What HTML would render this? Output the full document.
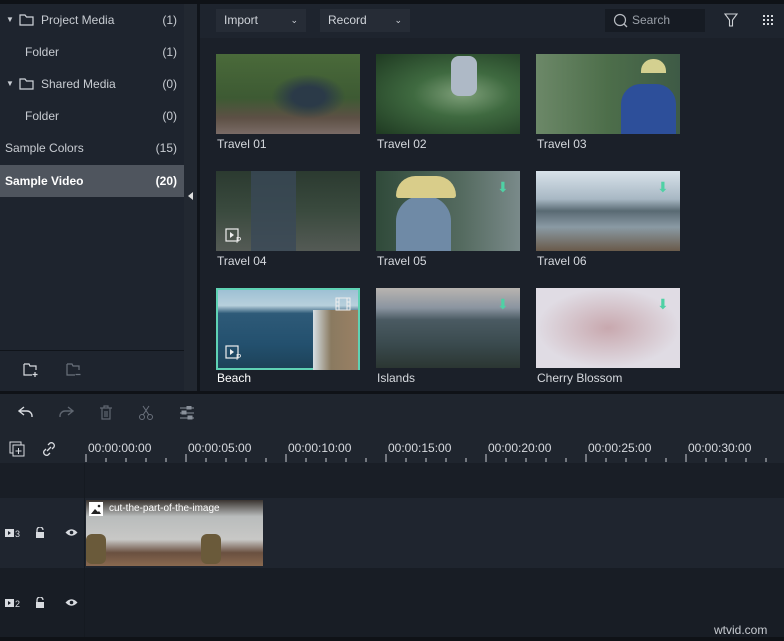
<!DOCTYPE html><html><head><style>
*{margin:0;padding:0;box-sizing:border-box}
body{width:784px;height:641px;background:#1b2029;font-family:"Liberation Sans",sans-serif;color:#d0d4da;font-size:12px;position:relative;overflow:hidden}
.a{position:absolute}
.row{position:absolute;left:0;width:184px;height:32px;line-height:32px;font-size:12px;color:#c8ccd2}
.row .n{position:absolute;right:7px}
.th{position:absolute;width:144px;height:80px}
.lb{position:absolute;font-size:12px;color:#d6d9de}
.dl{position:absolute;width:14px;height:14px;color:#4fd1a5;font-size:14px}
</style></head><body>
<div class="a" style="left:0;top:0;width:784px;height:4px;background:#0f1217"></div>
<!-- left panel -->
<div class="a" style="left:0;top:4px;width:184px;height:387px;background:#1e242e"></div>
<div class="a" style="left:184px;top:4px;width:13px;height:387px;background:#222831"></div>
<div class="a" style="left:197px;top:4px;width:3px;height:387px;background:#10141a"></div>
<div class="row" style="top:4px"><span style="position:absolute;left:6px;font-size:8px">▼</span><svg class="a" style="left:19px;top:9px" width="15" height="13"><path d="M1 2h5l1.5 2H14v8H1z" fill="none" stroke="#d0d4da" stroke-width="1.2"/></svg><span style="position:absolute;left:41px">Project Media</span><span class="n">(1)</span></div>
<div class="row" style="top:36px"><span style="position:absolute;left:25px">Folder</span><span class="n">(1)</span></div>
<div class="row" style="top:68px"><span style="position:absolute;left:6px;font-size:8px">▼</span><svg class="a" style="left:19px;top:9px" width="15" height="13"><path d="M1 2h5l1.5 2H14v8H1z" fill="none" stroke="#d0d4da" stroke-width="1.2"/></svg><span style="position:absolute;left:41px">Shared Media</span><span class="n">(0)</span></div>
<div class="row" style="top:100px"><span style="position:absolute;left:25px">Folder</span><span class="n">(0)</span></div>
<div class="row" style="top:132px"><span style="position:absolute;left:5px">Sample Colors</span><span class="n">(15)</span></div>
<div class="row" style="top:165px;background:#4f555e;color:#fff;font-weight:bold;height:32px"><span style="position:absolute;left:5px">Sample Video</span><span class="n">(20)</span></div>
<div class="a" style="left:188px;top:192px;width:0;height:0;border-top:4px solid transparent;border-bottom:4px solid transparent;border-right:5px solid #ddd"></div>
<div class="a" style="left:0;top:350px;width:184px;height:1px;background:#10141a"></div>
<svg class="a" style="left:23px;top:363px" width="16" height="14"><path d="M1 1h5l1 2h6v4M1 1v11h8M12 9v5M9.5 11.5h5" fill="none" stroke="#d8dbe0" stroke-width="1.2"/></svg>
<svg class="a" style="left:66px;top:363px" width="16" height="14"><path d="M1 1h5l1 2h6v4M1 1v11h8M9.5 11.5h5" fill="none" stroke="#6a717c" stroke-width="1.2"/></svg>
<!-- right toolbar -->
<div class="a" style="left:200px;top:4px;width:584px;height:34px;background:#1e242e"></div>
<div class="a" style="left:216px;top:9px;width:90px;height:23px;background:#262c36;line-height:23px;padding-left:8px">Import<span style="position:absolute;right:8px;font-size:9px">⌄</span></div>
<div class="a" style="left:320px;top:9px;width:90px;height:23px;background:#262c36;line-height:23px;padding-left:8px">Record<span style="position:absolute;right:8px;font-size:9px">⌄</span></div>
<div class="a" style="left:605px;top:9px;width:100px;height:23px;background:#161b23;line-height:23px;padding-left:27px;color:#9aa0a8">Search</div>
<svg class="a" style="left:613px;top:13px" width="16" height="16"><circle cx="7" cy="7" r="5.5" fill="none" stroke="#b8bcc2" stroke-width="1.2"/><path d="M11 11l3 3" stroke="#b8bcc2" stroke-width="1.3"/></svg>
<svg class="a" style="left:724px;top:13px" width="14" height="14"><path d="M1 1h12L8.5 7v6h-3V7z" fill="none" stroke="#cfd2d6" stroke-width="1.1"/></svg>
<svg class="a" style="left:763px;top:15px" width="12" height="12" fill="#d8dbe0"><rect x="0" y="0" width="2" height="2"/><rect x="4" y="0" width="2" height="2"/><rect x="8" y="0" width="2" height="2"/><rect x="0" y="4" width="2" height="2"/><rect x="4" y="4" width="2" height="2"/><rect x="8" y="4" width="2" height="2"/><rect x="0" y="8" width="2" height="2"/><rect x="4" y="8" width="2" height="2"/><rect x="8" y="8" width="2" height="2"/></svg>
<!-- thumbnails -->
<div class="th" style="left:216px;top:54px;background:linear-gradient(180deg,#4a6a3a 0%,#3d5a33 55%,#5d5045 80%,#7a6b66 100%)"><div class="a" style="left:55px;top:20px;width:75px;height:45px;background:radial-gradient(ellipse,#2b3a48 30%,transparent 70%)"></div></div>
<div class="th" style="left:376px;top:54px;background:radial-gradient(ellipse at 60% 50%,#7fa07a 0%,#3f6a40 40%,#1f3a22 100%)"><div class="a" style="left:75px;top:2px;width:26px;height:40px;background:#aeb9c6;border-radius:8px"></div></div>
<div class="th" style="left:536px;top:54px;background:linear-gradient(90deg,#6c8868,#4d6e4a 50%,#3e5a46)"><div class="a" style="left:85px;top:30px;width:55px;height:50px;background:#2d4f9a;border-radius:20px 20px 0 0"></div><div class="a" style="left:105px;top:5px;width:25px;height:14px;background:#d4d090;border-radius:12px 12px 0 0"></div></div>
<div class="lb" style="left:217px;top:137px">Travel 01</div><div class="lb" style="left:377px;top:137px">Travel 02</div><div class="lb" style="left:537px;top:137px">Travel 03</div>
<div class="th" style="left:216px;top:171px;background:linear-gradient(180deg,#2b3a30,#3a4a3e 50%,#545a55)"><div class="a" style="left:35px;top:0;width:45px;height:80px;background:#3a4858;opacity:.8"></div></div>
<div class="th" style="left:376px;top:171px;background:linear-gradient(90deg,#304a3a,#556b60 60%,#7a8a8a)"><div class="a" style="left:20px;top:25px;width:55px;height:55px;background:#6f8aa6;border-radius:25px 25px 0 0"></div><div class="a" style="left:20px;top:5px;width:60px;height:22px;background:#d9cd8a;border-radius:30px 30px 4px 4px"></div></div>
<div class="th" style="left:536px;top:171px;background:linear-gradient(180deg,#d8e2ea 0%,#a8b8c4 35%,#596a73 50%,#8a9aa4 70%,#6a5a4a 100%)"></div>
<div class="lb" style="left:217px;top:254px">Travel 04</div><div class="lb" style="left:377px;top:254px">Travel 05</div><div class="lb" style="left:537px;top:254px">Travel 06</div>
<div class="th" style="left:216px;top:288px;width:144px;height:82px;border:2px solid #5fd2b4;background:linear-gradient(180deg,#9ec0d4 0%,#b8d0dc 20%,#2e5a78 30%,#23506e 70%,#1d4258 100%)"><div class="a" style="left:95px;top:20px;width:45px;height:60px;background:linear-gradient(90deg,#d6dfe4,#8a7a60 40%,#9a8064)"></div></div>
<div class="th" style="left:376px;top:288px;background:linear-gradient(180deg,#b8b4b0 0%,#8a94a0 25%,#4a5a62 40%,#3a4a4e 70%,#2b3632 100%)"></div>
<div class="th" style="left:536px;top:288px;background:radial-gradient(ellipse,#c8a8ae,#e0dce4 70%)"></div>
<div class="lb" style="left:217px;top:371px;color:#fff">Beach</div><div class="lb" style="left:377px;top:371px">Islands</div><div class="lb" style="left:537px;top:371px">Cherry Blossom</div>
<div class="dl" style="left:497px;top:179px">⬇</div><div class="dl" style="left:657px;top:179px">⬇</div><div class="dl" style="left:497px;top:296px">⬇</div><div class="dl" style="left:657px;top:296px">⬇</div>
<svg class="a" style="left:225px;top:228px" width="18" height="16"><rect x="1" y="1" width="12" height="12" fill="none" stroke="#eee" stroke-width="1.2"/><path d="M5 4l4 3-4 3z" fill="#eee"/><text x="11" y="15" font-size="8" fill="#eee" font-family="Liberation Sans">P</text></svg>
<svg class="a" style="left:225px;top:345px" width="18" height="16"><rect x="1" y="1" width="12" height="12" fill="none" stroke="#eee" stroke-width="1.2"/><path d="M5 4l4 3-4 3z" fill="#eee"/><text x="11" y="15" font-size="8" fill="#eee" font-family="Liberation Sans">P</text></svg>
<svg class="a" style="left:335px;top:297px" width="16" height="14"><rect x="1" y="1" width="14" height="12" fill="none" stroke="#eee"/><path d="M4 1v12M12 1v12M1 5h3M1 9h3M12 5h3M12 9h3" stroke="#eee"/></svg>
<!-- separator -->
<div class="a" style="left:0;top:391px;width:784px;height:3px;background:#0f1217"></div>
<!-- timeline toolbar -->
<div class="a" style="left:0;top:394px;width:784px;height:69px;background:#1f252e"></div>
<svg class="a" style="left:18px;top:405px" width="16" height="14"><path d="M6 2L1 6l5 4M1 6h8a5 5 0 0 1 5 5v1" fill="none" stroke="#d8dbe0" stroke-width="1.4"/></svg>
<svg class="a" style="left:58px;top:405px" width="16" height="14"><path d="M10 2l5 4-5 4M15 6H7a5 5 0 0 0-5 5v1" fill="none" stroke="#5f6670" stroke-width="1.4"/></svg>
<svg class="a" style="left:99px;top:405px" width="14" height="15"><path d="M1 3h12M5 3V1h4v2M3 3v11h8V3M6 6v6M8 6v6" fill="none" stroke="#5f6670" stroke-width="1.2"/></svg>
<svg class="a" style="left:138px;top:405px" width="16" height="16"><circle cx="4" cy="12" r="2.5" fill="none" stroke="#6a717c"/><circle cx="12" cy="12" r="2.5" fill="none" stroke="#6a717c"/><path d="M5 10L11 1M11 10L5 1" stroke="#6a717c"/></svg>
<svg class="a" style="left:179px;top:406px" width="16" height="14" stroke="#8a919b"><path d="M1 2h14M1 7h14M1 12h14"/><rect x="8" y="0" width="4" height="3" fill="#8a919b"/><rect x="3" y="5" width="4" height="3" fill="#8a919b"/><rect x="9" y="10" width="4" height="3" fill="#8a919b"/></svg>
<svg class="a" style="left:9px;top:441px" width="17" height="17"><rect x="1" y="1" width="11" height="11" fill="none" stroke="#d8dbe0"/><rect x="4" y="4" width="11" height="11" fill="#1f252e" stroke="#d8dbe0"/><path d="M9.5 7v6M6.5 10h6" stroke="#d8dbe0"/></svg>
<svg class="a" style="left:41px;top:441px" width="16" height="16"><path d="M7 4l2-2a3 3 0 0 1 4 4l-2 2M9 12l-2 2a3 3 0 0 1-4-4l2-2M6 10l4-4" fill="none" stroke="#d8dbe0" stroke-width="1.3"/></svg>
<svg class="a" style="left:84px;top:438px" width="700" height="25">
<g fill="#d6d9de" font-family="Liberation Sans" font-size="12"><text x="4" y="14">00:00:00:00</text><text x="104" y="14">00:00:05:00</text><text x="204" y="14">00:00:10:00</text><text x="304" y="14">00:00:15:00</text><text x="404" y="14">00:00:20:00</text><text x="504" y="14">00:00:25:00</text><text x="604" y="14">00:00:30:00</text></g>
<g stroke="#c8ccd2">
<path d="M2 16v8M102 16v8M202 16v8M302 16v8M402 16v8M502 16v8M602 16v8"/>
<path d="M22 20v4M42 20v4M62 20v4M82 20v4M122 20v4M142 20v4M162 20v4M182 20v4M222 20v4M242 20v4M262 20v4M282 20v4M322 20v4M342 20v4M362 20v4M382 20v4M422 20v4M442 20v4M462 20v4M482 20v4M522 20v4M542 20v4M562 20v4M582 20v4M622 20v4M642 20v4M662 20v4M682 20v4"/></g></svg>
<!-- tracks -->
<div class="a" style="left:0;top:463px;width:784px;height:35px;background:#191e26"></div>
<div class="a" style="left:0;top:498px;width:784px;height:70px;background:#1f252f"></div>
<div class="a" style="left:0;top:568px;width:784px;height:69px;background:#181d25"></div>
<div class="a" style="left:84px;top:463px;width:1px;height:174px;background:#151a21"></div>
<div class="a" style="left:0;top:637px;width:784px;height:4px;background:#0f1217"></div>
<div class="a" style="left:86px;top:500px;width:177px;height:66px;background:linear-gradient(180deg,#3a3430 0%,#b9bcbc 25%,#c8c8c6 60%,#6a5040 80%,#8a6a50 100%)"><div class="a" style="left:0;top:34px;width:20px;height:30px;background:#6a5a3a;border-radius:6px"></div><div class="a" style="left:115px;top:34px;width:20px;height:30px;background:#6a5a3a;border-radius:6px"></div></div>
<div class="a" style="left:89px;top:502px;width:14px;height:14px;background:#fff"></div>
<svg class="a" style="left:89px;top:502px" width="14" height="14"><path d="M2 12l4-5 3 3 1-1 2 3z" fill="#222"/><circle cx="10" cy="4" r="1.3" fill="#222"/></svg>
<div class="a" style="left:109px;top:503px;font-size:10px;color:#fff">cut-the-part-of-the-image</div>
<svg class="a" style="left:5px;top:528px" width="20" height="12"><rect x="0" y="1" width="9" height="8" fill="#d8dbe0"/><path d="M3 3l3 2-3 2z" fill="#1f252f"/><text x="10" y="9" font-size="9" fill="#d8dbe0" font-family="Liberation Sans">3</text></svg>
<svg class="a" style="left:5px;top:598px" width="20" height="12"><rect x="0" y="1" width="9" height="8" fill="#d8dbe0"/><path d="M3 3l3 2-3 2z" fill="#181d25"/><text x="10" y="9" font-size="9" fill="#d8dbe0" font-family="Liberation Sans">2</text></svg>
<svg class="a" style="left:35px;top:527px" width="10" height="12"><path d="M2 5V3a3 3 0 0 1 6 0" fill="none" stroke="#d8dbe0" stroke-width="1.3"/><rect x="1" y="5" width="8" height="6" fill="#d8dbe0"/></svg>
<svg class="a" style="left:35px;top:597px" width="10" height="12"><path d="M2 5V3a3 3 0 0 1 6 0" fill="none" stroke="#d8dbe0" stroke-width="1.3"/><rect x="1" y="5" width="8" height="6" fill="#d8dbe0"/></svg>
<svg class="a" style="left:65px;top:528px" width="13" height="9"><path d="M0.5 4.5Q6.5-2 12.5 4.5Q6.5 11 0.5 4.5z" fill="#d8dbe0"/><circle cx="6.5" cy="4.5" r="1.8" fill="#1f252f"/></svg>
<svg class="a" style="left:65px;top:598px" width="13" height="9"><path d="M0.5 4.5Q6.5-2 12.5 4.5Q6.5 11 0.5 4.5z" fill="#d8dbe0"/><circle cx="6.5" cy="4.5" r="1.8" fill="#181d25"/></svg>
<div class="a" style="left:714px;top:623px;font-size:12px;color:#c8ccd2">wtvid.com</div>
</body></html>
